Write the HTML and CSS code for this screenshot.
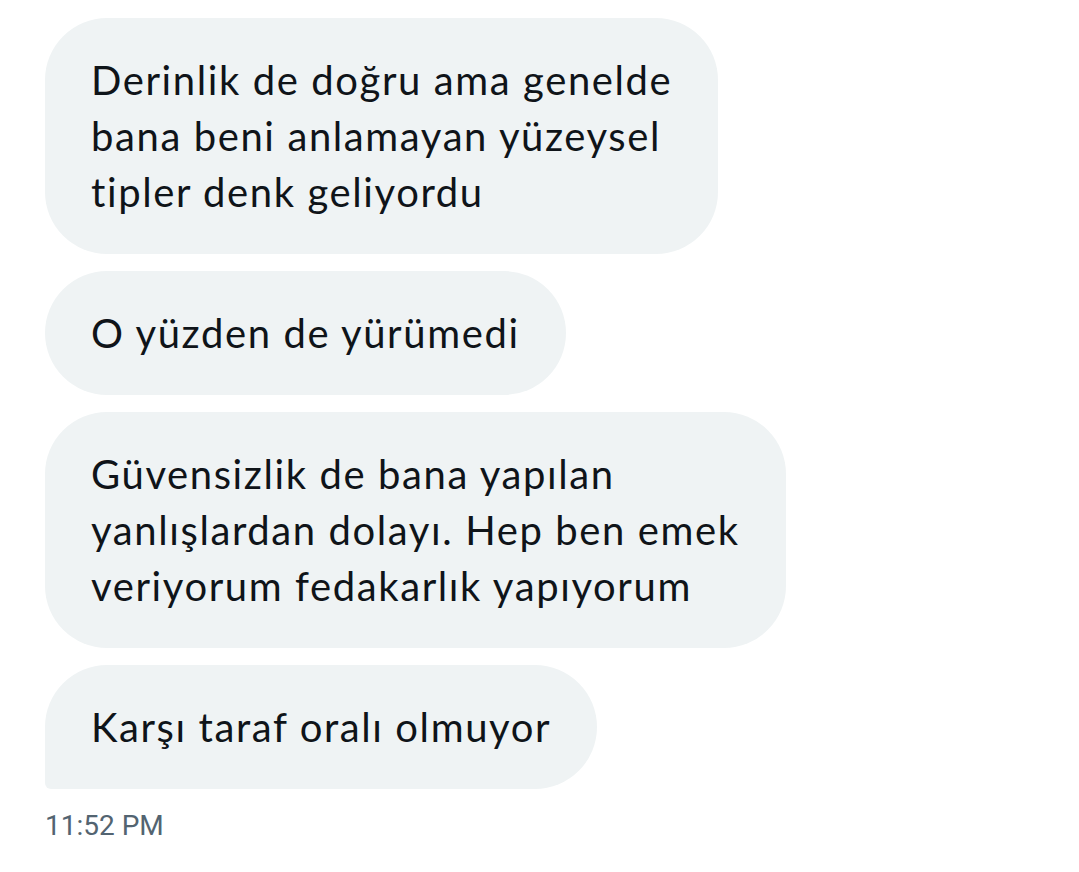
FILE: index.html
```html
<!DOCTYPE html>
<html lang="tr">
<head>
<meta charset="utf-8">
<link rel="stylesheet" href="styles.css">
</head>
<body>
<div class="thread">
  <div class="bubble">Derinlik de doğru ama genelde<br>bana beni anlamayan yüzeysel<br>tipler denk geliyordu</div>
  <div class="bubble">O yüzden de yürümedi</div>
  <div class="bubble">Güvensizlik de bana yapılan<br>yanlışlardan dolayı. Hep ben emek<br>veriyorum fedakarlık yapıyorum</div>
  <div class="bubble last">Karşı taraf oralı olmuyor</div>
  <div class="time">11:52 PM</div>
</div>
</body>
</html>
```
FILE: styles.css
```css
html, body {
  margin: 0;
  padding: 0;
  background: #ffffff;
}
.thread {
  display: flex;
  flex-direction: column;
  align-items: flex-start;
  gap: 17px;
  padding: 18px 0 0 45px;
}
.bubble {
  background: #eff3f4;
  color: #0f1419;
  font-family: Lato, "Noto Sans", sans-serif;
  font-size: 40px;
  letter-spacing: 1.6px;
  line-height: 56px;
  padding: 34px 46px;
  border-radius: 62px;
}
.bubble.last {
  border-bottom-left-radius: 6px;
}
.time {
  font-family: Roboto, "Liberation Sans", sans-serif;
  font-size: 28px;
  color: #536471;
  margin-top: 0;
  line-height: 40px;
}
```
